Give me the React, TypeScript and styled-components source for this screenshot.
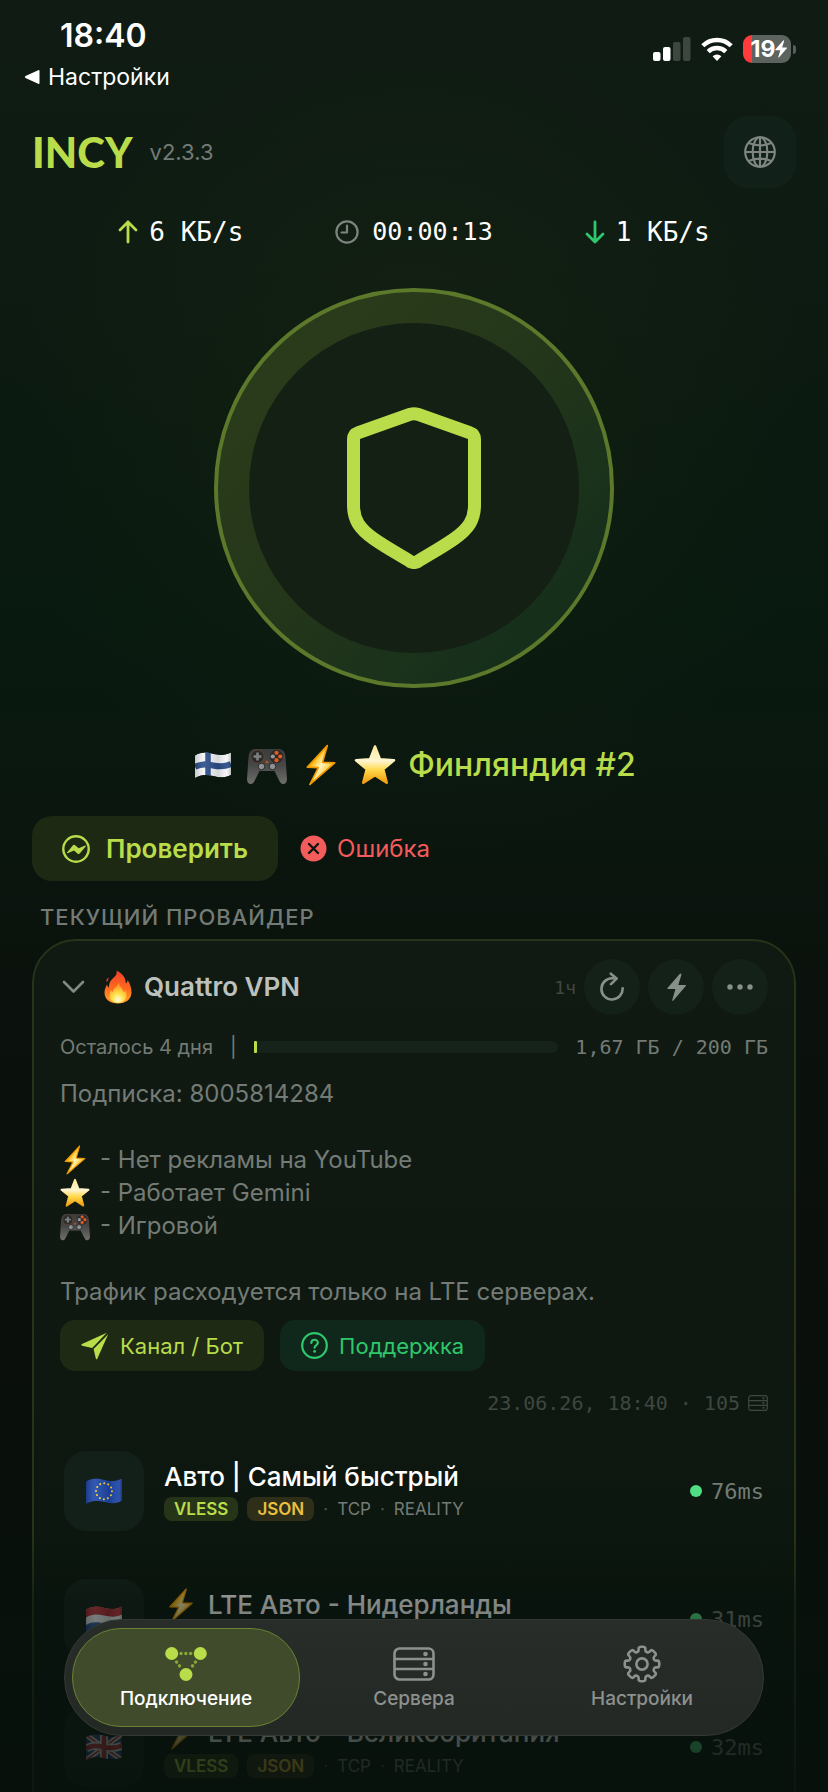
import React from "react";
import styled, { createGlobalStyle, css } from "styled-components";

const sans = `Inter, "Noto Sans", "Liberation Sans", sans-serif`;
const mono = `"DejaVu Sans Mono", "Liberation Mono", monospace`;

const color = {
  lime: "#b8dc4a",
  green: "#2fc76c",
  amber: "#e8c03e",
  red: "#f45b5b",
  text: "#ffffff",
  soft: "#bdc1be",
  muted: "#747b76",
  faint: "#3e4741",
  tile: "#13201a",
};

const GlobalStyle = createGlobalStyle`
  *, *::before, *::after { box-sizing: border-box; }
  body { margin: 0; background: #0b130d; }
  button, a { font: inherit; color: inherit; text-decoration: none; }
  button { border: 0; padding: 0; background: none; cursor: pointer; }
  h1, h2, h3, p, ul { margin: 0; padding: 0; list-style: none; font: inherit; }
  svg { display: block; flex: none; }
`;

const Shell = styled.div`
  position: relative;
  height: 100vh;
  overflow: hidden;
  font-family: ${sans};
  color: ${color.text};
  background:
    radial-gradient(ellipse 400px 440px at 50% 420px, rgba(34, 44, 18, 0.3), transparent),
    linear-gradient(180deg, #0f1b13 0, #0e1b12 240px, #08190f 620px, #0a170f 780px, #0b110c 1000px, #0a0f0b 1350px, #07120e 1792px);
`;

const Page = styled.main`
  display: flex;
  flex-direction: column;
  padding: 0 32px;
`;

/* Status bar */

const StatusBar = styled.header`
  display: flex;
  justify-content: space-between;
  align-items: flex-start;
  padding: 17px 32px 0 24px;
`;

const Clock = styled.div`
  padding-left: 36px;
  font-size: 32px;
  line-height: 38px;
  font-weight: 600;
`;

const BackLink = styled.a`
  display: flex;
  align-items: center;
  gap: 8px;
  margin-top: 8px;
  font-size: 23px;
  line-height: 28px;
`;

const Indicators = styled.div`
  display: flex;
  align-items: center;
  gap: 10px;
  padding-top: 18px;
`;

const Battery = styled.div`
  display: flex;
  align-items: center;
  gap: 2px;
`;

const BatteryBody = styled.div`
  display: flex;
  align-items: center;
  justify-content: center;
  width: 48px;
  height: 28px;
  padding-left: 4px;
  border-radius: 9px;
  font-size: 23px;
  line-height: 28px;
  font-weight: 700;
  background: linear-gradient(90deg, #ff3b3b 9px, #5d645f 9px);
`;

const BatteryTip = styled.div`
  width: 3px;
  height: 9px;
  border-radius: 0 3px 3px 0;
  background: #59605b;
`;

/* Title and traffic */

const TitleBar = styled.div`
  display: flex;
  align-items: center;
  gap: 17px;
  margin-top: 25px;
`;

const Brand = styled.h1`
  font-family: Lato, ${sans};
  font-size: 42px;
  line-height: 48px;
  font-weight: 900;
  color: ${color.lime};
`;

const Version = styled.span`
  flex: 1;
  font-size: 22px;
  color: ${color.muted};
`;

const LanguageButton = styled.button`
  display: grid;
  place-items: center;
  width: 72px;
  height: 72px;
  border-radius: 24px;
  color: #7f8681;
  background: #112018;
`;

const Stats = styled.div`
  display: flex;
  justify-content: center;
  gap: 92px;
  margin-top: 28px;
  font-family: ${mono};
  line-height: 32px;
`;

const Stat = styled.div<{ $timer?: boolean }>`
  display: flex;
  align-items: center;
  gap: ${(p) => (p.$timer ? 13 : 11)}px;
  font-size: ${(p) => (p.$timer ? 25 : 26)}px;
  white-space: pre;
`;

/* Connect control */

const ConnectButton = styled.button`
  display: grid;
  place-items: center;
  align-self: center;
  width: 400px;
  height: 400px;
  margin-top: 40px;
  border: 4px solid #5c792b;
  border-radius: 50%;
  background: linear-gradient(135deg, #2a3b1b 20%, #25371a 45%, #162f1b 82%);
`;

const ConnectCore = styled.span`
  display: grid;
  place-items: center;
  width: 330px;
  height: 330px;
  border-radius: 50%;
  background: #142014;
`;

const Location = styled.h2`
  display: flex;
  align-items: center;
  justify-content: center;
  gap: 12px;
  margin-top: 56px;
  font-size: 32px;
  line-height: 40px;
  font-weight: 500;
  color: ${color.lime};
`;

const EmojiCell = styled.span`
  display: grid;
  place-items: center;
  width: 42px;
  height: 42px;
`;

const Actions = styled.div`
  display: flex;
  align-items: center;
  gap: 22px;
  margin-top: 30px;
`;

const CheckButton = styled.button`
  display: flex;
  align-items: center;
  gap: 16px;
  height: 65px;
  padding: 0 30px;
  border-radius: 20px;
  font-size: 26px;
  font-weight: 600;
  color: ${color.lime};
  background: #1e2914;
`;

const CheckResult = styled.p`
  display: flex;
  align-items: center;
  gap: 10px;
  font-size: 24px;
  color: ${color.red};
`;

const SectionLabel = styled.h2`
  margin: 24px 0 0 8px;
  font-size: 22px;
  line-height: 24px;
  font-weight: 500;
  letter-spacing: 1px;
  text-transform: uppercase;
  color: ${color.muted};
`;

/* Provider card */

const Card = styled.section`
  margin-top: 10px;
  padding: 18px 26px;
  border: 2px solid #283318;
  border-radius: 44px;
  background: linear-gradient(180deg, #101a12, #0e1810 50%, #08140d);
`;

const CardHeader = styled.div`
  display: flex;
  align-items: center;
  gap: 8px;
`;

const ProviderToggle = styled.button`
  display: flex;
  flex: 1;
  align-items: center;
  gap: 12px;
  font-size: 26px;
  line-height: 32px;
  font-weight: 600;
  text-align: left;
  color: ${color.soft};
`;

const Age = styled.span`
  font-family: ${mono};
  font-size: 18px;
  color: ${color.faint};
`;

const RoundButton = styled.button`
  display: grid;
  place-items: center;
  width: 56px;
  height: 56px;
  border-radius: 50%;
  color: #879089;
  background: #142118;
`;

const Usage = styled.div`
  display: flex;
  align-items: center;
  gap: 17px;
  margin-top: 18px;
  font-size: 20px;
  line-height: 28px;
  color: ${color.muted};
`;

const UsageTrack = styled.div`
  flex: 1;
  height: 12px;
  border-radius: 0 6px 6px 0;
  background: #15231a;
`;

const UsageFill = styled.div`
  min-width: 3px;
  height: 100%;
  border-radius: 1px;
  background: ${color.lime};
`;

const UsageAmount = styled.span`
  font-family: ${mono};
`;

const Notes = styled.div`
  margin-top: 16px;
  font-size: 24px;
  line-height: 33px;
  color: ${color.muted};
`;

const NoteLine = styled.p`
  display: flex;
  align-items: center;
  gap: 10px;
  min-height: 33px;
`;

const Links = styled.div`
  display: flex;
  gap: 16px;
  margin-top: 12px;
`;

const LinkButton = styled.a<{ $tone: "lime" | "green" }>`
  display: flex;
  align-items: center;
  gap: 11px;
  height: 51px;
  padding: 0 21px;
  border-radius: 15px;
  font-size: 22px;
  color: ${(p) => color[p.$tone]};
  background: ${(p) => (p.$tone === "lime" ? "#1f2a14" : "#10281b")};
`;

const Meta = styled.p`
  display: flex;
  align-items: center;
  justify-content: flex-end;
  gap: 8px;
  margin-top: 20px;
  font-family: ${mono};
  font-size: 20px;
  line-height: 24px;
  color: ${color.faint};
`;

/* Server list */

const ServerList = styled.ul`
  margin-top: 12px;
`;

const ServerRow = styled.li`
  display: flex;
  align-items: center;
  gap: 20px;
  padding: 24px 4px;
`;

const FlagTile = styled.div`
  display: grid;
  place-items: center;
  width: 80px;
  height: 80px;
  border-radius: 22px;
  background: ${color.tile};
`;

const ServerInfo = styled.div`
  flex: 1;
`;

const ServerName = styled.h3`
  display: flex;
  align-items: center;
  gap: 10px;
  font-size: 26px;
  line-height: 32px;
  font-weight: 500;
`;

const Tags = styled.div`
  display: flex;
  align-items: center;
  gap: 9px;
  margin-top: 4px;
  font-size: 17px;
  line-height: 24px;
  color: ${color.muted};
`;

const Tag = styled.span<{ $tone: "lime" | "amber" }>`
  padding: 0 10px;
  border-radius: 8px;
  font-weight: 600;
  color: ${(p) => color[p.$tone]};
  background: ${(p) => (p.$tone === "lime" ? "#263418" : "#2e2e19")};
`;

const Separator = styled.span`
  color: #4d554f;
`;

const Latency = styled.div`
  display: flex;
  align-items: center;
  gap: 9px;
  font-family: ${mono};
  font-size: 22px;
  color: ${color.muted};

  &::before {
    content: "";
    width: 12px;
    height: 12px;
    border-radius: 50%;
    background: #50de82;
  }
`;

/* Bottom navigation */

const BottomFade = styled.div`
  position: absolute;
  inset: auto 0 0;
  height: 256px;
  pointer-events: none;
  background: linear-gradient(
    180deg,
    rgba(8, 17, 12, 0),
    rgba(8, 17, 12, 0.5) 26%,
    rgba(8, 17, 12, 0.74) 76%,
    rgba(8, 17, 12, 0.8)
  );
`;

const NavBar = styled.nav`
  position: absolute;
  inset: auto 64px 56px;
  display: flex;
  padding: 8px 7px;
  border: 1px solid #323834;
  border-radius: 58px;
  background: linear-gradient(180deg, #282d2a, #232825);
`;

const NavItem = styled.a<{ $active?: boolean }>`
  display: flex;
  flex: 1;
  flex-direction: column;
  align-items: center;
  gap: 4px;
  padding: 16px 0 15px;
  border: 1px solid transparent;
  border-radius: 49px;
  font-size: 19px;
  line-height: 24px;
  font-weight: 500;
  color: #8d918e;
  ${(p) =>
    p.$active &&
    css`
      color: ${color.text};
      border-color: #6a8234;
      background: #404b2b;
    `}
`;

const NavIcon = styled.span`
  display: grid;
  place-items: center;
  height: 38px;
`;

/* Icons */

const BackIcon = () => (
  <svg width="16" height="16" viewBox="0 0 16 16">
    <path d="M15.500 2v12q0 1.500-1.300.8L1.500 8.900q-1.500-.9 0-1.800L14.200 1.200q1.300-.7 1.300.8z" fill="#fff" />
  </svg>
);

const SignalIcon = () => (
  <svg width="38" height="24" viewBox="0 0 38 24">
    <rect x="0" y="15" width="7.500" height="9" rx="2" fill="#fff" />
    <rect x="10" y="10" width="7.500" height="14" rx="2" fill="#fff" />
    <rect x="20" y="5" width="7.500" height="19" rx="2" fill="#3d463f" />
    <rect x="30" y="0" width="7.500" height="24" rx="2" fill="#3d463f" />
  </svg>
);

const WifiIcon = () => (
  <svg width="32" height="24" viewBox="0 0 32 24" fill="none" stroke="#fff" strokeWidth="4.400">
    <path d="M1.800 8.800a20.200 20.200 0 0 1 28.400 0" />
    <path d="M7.200 14.600a12.600 12.600 0 0 1 17.600 0" />
    <path d="M11.600 19.200a6.300 6.300 0 0 1 8.800 0L16 24z" fill="#fff" stroke="none" />
  </svg>
);

const boltPath = "M15 1 3.500 14.200q-.7 1 .5 1h7L8 25.500q-.2 1.700 1.200.4L20.800 12.300q.7-1-.5-1h-6.600L16.600 1.800Q16.700-.3 15 1z";

const BoltIcon = ({ size, fill = "currentColor" }: { size: number; fill?: string }) => (
  <svg width={size} height={size * 1.5} viewBox="3 0 18 27">
    <path d={boltPath} fill={fill} />
  </svg>
);

const GlobeIcon = () => (
  <svg width="32" height="32" viewBox="0 0 34 34" fill="none" stroke="currentColor" strokeWidth="2.300">
    <circle cx="17" cy="17" r="15.700" />
    <ellipse cx="17" cy="17" rx="7.800" ry="15.700" />
    <path d="M17 1.500v31M1.500 17h31M5 7.500q12 5 24 0M5 26.500q12-5 24 0" />
  </svg>
);

const ArrowIcon = ({ down }: { down?: boolean }) => (
  <svg
    width="20" height="24" viewBox="0 0 20 24" fill="none" strokeWidth="2.800"
    strokeLinecap="round" strokeLinejoin="round" stroke={down ? color.green : color.lime}
  >
    <path d={down ? "M10 2v20M2 14l8 8 8-8" : "M10 22V2M2 10l8-8 8 8"} />
  </svg>
);

const ClockIcon = () => (
  <svg width="24" height="24" viewBox="0 0 24 24" fill="none" stroke="#7d847f" strokeWidth="2.200">
    <circle cx="12" cy="12" r="10.600" />
    <path d="M12 5.500V12.500H6.500" strokeLinecap="round" strokeLinejoin="round" />
  </svg>
);

const ShieldIcon = () => (
  <svg width="134" height="162" viewBox="0 0 134 162" fill="none" stroke={color.lime} strokeWidth="13" strokeLinejoin="round">
    <path d="M63.500 7.200q3.500-1 7 0L122.500 25.600q5 1.800 5 6.500v66c0 15-6 23.500-20 33.500-11 7.800-25 15.600-37 23q-3.500 1.800-7 0c-12-7.400-26-15.200-37-23-14-10-20-18.500-20-33.500v-66q0-4.700 5-6.500z" />
  </svg>
);

const PulseIcon = () => (
  <svg width="28" height="28" viewBox="0 0 28 28">
    <circle cx="14" cy="14" r="12.700" fill="none" stroke="currentColor" strokeWidth="2.400" />
    <path d="M5 17.600 11 10.200q.8-.8 1.800-.1l3.900 3.100 6.500-2.600q1.100-.1.500.8l-6 7.200q-.9.9-2 .1L12 15.500 5.600 18.300q-1 .2-.6-.7z" fill="currentColor" />
  </svg>
);

const ErrorIcon = () => (
  <svg width="27" height="27" viewBox="0 0 27 27">
    <circle cx="13.500" cy="13.500" r="13" fill="currentColor" />
    <path d="m9 9 9 9m0-9-9 9" stroke="#0c150f" strokeWidth="2.400" strokeLinecap="round" />
  </svg>
);

const ChevronIcon = () => (
  <svg width="32" height="16" viewBox="0 0 32 16" fill="none" stroke="#828984" strokeWidth="2.600" strokeLinecap="round" strokeLinejoin="round">
    <path d="m4 3 9.500 9.500L23 3" />
  </svg>
);

const ReloadIcon = () => (
  <svg width="28" height="30" viewBox="0 0 28 30" fill="none" stroke="currentColor" strokeWidth="2.600" strokeLinecap="round" strokeLinejoin="round">
    <path d="M24.600 16.200A10.600 10.600 0 1 1 14 6.300h4.500M12.800 1.700l5.800 4.900-5.600 5.600" />
  </svg>
);

const DotsIcon = () => (
  <svg width="26" height="6" viewBox="0 0 26 6" fill="currentColor">
    <circle cx="3" cy="3" r="2.700" />
    <circle cx="13" cy="3" r="2.700" />
    <circle cx="23" cy="3" r="2.700" />
  </svg>
);

const PlaneIcon = () => (
  <svg width="28" height="28" viewBox="0 0 28 28" fill="currentColor">
    <path d="M25.800.8 1 12q-1.600 1 .2 1.700l10 2.400L25.800.8z" />
    <path d="M27.200 2.200 16.400 26.400q-.8 1.700-1.600 0L12.600 17 27.200 2.200z" />
  </svg>
);

const HelpIcon = () => (
  <svg width="27" height="27" viewBox="0 0 27 27" fill="none" stroke="currentColor" strokeWidth="2.200" strokeLinecap="round">
    <circle cx="13.500" cy="13.500" r="12.300" />
    <path d="M10.300 11c.1-4.300 6.500-4.200 6.500-.3 0 2.600-3.200 2.500-3.200 5" />
    <path d="M13.600 19.300v.1" strokeWidth="2.800" />
  </svg>
);

const ServersIcon = ({ width }: { width: number }) => (
  <svg width={width} height={(width * 34) / 42} viewBox="0 0 42 34" fill="none" stroke="currentColor" strokeWidth="2.600">
    <rect x="1.500" y="1.500" width="39" height="31" rx="5" />
    <path d="M2 12h38M2 22h38" />
    <g fill="currentColor" stroke="none">
      <circle cx="32.500" cy="7" r="2.300" />
      <circle cx="32.500" cy="17" r="2.300" />
      <circle cx="32.500" cy="27" r="2.300" />
    </g>
  </svg>
);

const NodesIcon = () => (
  <svg width="42" height="34" viewBox="0 0 42 34">
    <g fill={color.lime}>
      <circle cx="6.700" cy="6.500" r="6.500" />
      <circle cx="35.300" cy="6.500" r="6.500" />
      <circle cx="21" cy="27.500" r="6.500" />
    </g>
    <path d="M16 6.500h12M11.500 15l5 6.500M30.500 15l-5 6.500" stroke="#88a53b" strokeWidth="3.400" strokeLinecap="round" strokeDasharray="0.1 4.700" fill="none" />
  </svg>
);

/* Traces an eight-tooth cog with softened corners. */
const gearOutline = (() => {
  const corners: [number, number][] = [];
  for (let tooth = 0; tooth < 8; tooth++) {
    const base = (tooth * Math.PI) / 4 - Math.PI / 2;
    [[-0.25, 13], [-0.2, 17.6], [0.2, 17.6], [0.25, 13]].forEach(([offset, radius]) => {
      corners.push([19 + radius * Math.cos(base + offset), 19 + radius * Math.sin(base + offset)]);
    });
  }
  const between = (a: [number, number], b: [number, number], t: number) =>
    `${(a[0] + (b[0] - a[0]) * t).toFixed(2)} ${(a[1] + (b[1] - a[1]) * t).toFixed(2)}`;
  const parts = corners.map((corner, i) => {
    const previous = corners[(i + corners.length - 1) % corners.length];
    const next = corners[(i + 1) % corners.length];
    return `${i ? "L" : "M"}${between(corner, previous, 0.4)}Q${between(corner, corner, 0)} ${between(corner, next, 0.4)}`;
  });
  return `${parts.join("")}Z`;
})();

const GearIcon = () => (
  <svg width="38" height="38" viewBox="0 0 38 38" fill="none" stroke="currentColor" strokeWidth="2.600" strokeLinejoin="round">
    <path d={gearOutline} />
    <circle cx="19" cy="19" r="5.600" />
  </svg>
);

/* Pictograms */

const BoltEmoji = ({ size }: { size: number }) => (
  <svg width={size} height={size} viewBox="0 0 40 40">
    <defs>
      <linearGradient id="bolt" x1="0" y1="0" x2="1" y2="1">
        <stop offset="0.3" stopColor="#ffb300" />
        <stop offset="0.5" stopColor="#fff6c0" />
        <stop offset="0.75" stopColor="#ffc21a" />
      </linearGradient>
    </defs>
    <path d="M26 1.500 7 22l10.500.5L9.500 38.500 33 18 21.500 17.500z" fill="url(#bolt)" stroke="#f09a00" strokeWidth="1.600" strokeLinejoin="round" />
  </svg>
);

const StarEmoji = ({ size }: { size: number }) => (
  <svg width={size} height={size} viewBox="0 0 40 40">
    <defs>
      <linearGradient id="star" x1="0" y1="0" x2="0" y2="1">
        <stop offset="0" stopColor="#ffe9a0" />
        <stop offset="0.4" stopColor="#fff5cf" />
        <stop offset="0.65" stopColor="#ffd84a" />
        <stop offset="1" stopColor="#f09c10" />
      </linearGradient>
    </defs>
    <path d="m20 2.500 4.700 12.200 13.300.8-10.300 8.400 3.400 12.900L20 29.600 8.900 36.800l3.400-12.900L2 15.500l13.300-.8z" fill="url(#star)" stroke="url(#star)" strokeWidth="2.600" strokeLinejoin="round" />
  </svg>
);

const GamepadEmoji = ({ size }: { size: number }) => (
  <svg width={size} height={size} viewBox="0 0 40 40">
    <defs>
      <linearGradient id="pad" x1="0" y1="0" x2="0" y2="1">
        <stop offset="0" stopColor="#3c3c3c" />
        <stop offset="0.45" stopColor="#474747" />
        <stop offset="1" stopColor="#6e6e6c" />
      </linearGradient>
    </defs>
    <path d="M7 4h26q5 1 5.500 8L40 34q0 5-4 5-2.400 0-4-4l-4.500-9h-15L8 35q-1.600 4-4 4-4 0-4-5L1.500 12Q2 5 7 4z" fill="url(#pad)" />
    <circle cx="10.500" cy="11.500" r="6.600" fill="#2a2a2a" stroke="#6b4632" strokeWidth="0.800" />
    <circle cx="29.500" cy="11.500" r="6.600" fill="#2a2a2a" />
    <path d="M10.500 7.500v8M6.500 11.500h8" stroke="#7e8080" strokeWidth="2.600" />
    <g>
      <circle cx="29.500" cy="7.800" r="2.100" fill="#e65a1e" />
      <circle cx="33.200" cy="11.500" r="2.100" fill="#e65a1e" />
      <circle cx="25.800" cy="11.500" r="2.100" fill="#9a9a9a" />
      <circle cx="29.500" cy="15.200" r="2.100" fill="#e65a1e" />
      <circle cx="20" cy="17" r="1.300" fill="#c4521e" />
      <circle cx="14.500" cy="21.500" r="3.300" fill="#8d9192" stroke="#2a2a2a" />
      <circle cx="25.500" cy="21.500" r="3.300" fill="#8d9192" stroke="#2a2a2a" />
    </g>
  </svg>
);

const FireEmoji = () => (
  <svg width="28" height="34" viewBox="0 0 28 34">
    <defs>
      <linearGradient id="flame" x1="0" y1="0" x2="0" y2="1">
        <stop offset="0" stopColor="#f0402c" />
        <stop offset="0.55" stopColor="#ff6a1f" />
        <stop offset="1" stopColor="#ffa62a" />
      </linearGradient>
      <radialGradient id="flameCore" cx="0.5" cy="0.85" r="0.7">
        <stop offset="0" stopColor="#fffbe0" />
        <stop offset="0.45" stopColor="#ffe34a" />
        <stop offset="1" stopColor="#ff9a24" />
      </radialGradient>
    </defs>
    <path d="M12.500.5c6 3 9.500 7.500 9.300 13 1.200-.7 1.700-2 1.800-3.500 2.500 3.500 4 8 3.900 12.500C27.300 29.500 21.500 33.500 14 33.500S.7 29.500.5 23c-.1-3.500 1.200-6 2.500-8.500.4 1.500 1 2.500 2 3.200C4.800 11 8.500 9 11.300 6c1.300-1.500 1.700-3.500 1.200-5.500z" fill="url(#flame)" />
    <path d="M2.500 12c-.5-2 .5-3.500 2-4.500 0 2-.5 3.500-2 4.500z" fill="#f0402c" />
    <path d="M14.500 12.500c.5 4 4.500 5.500 5 9.500 1-.3 1.500-1 1.800-2 1.200 2.500 1.700 4.500 1 7-1 4-4.500 5.800-8.300 5.800S6.300 31 5.500 27c-.5-3 .3-5 1.500-7 .5 1.200 1 1.700 1.800 2 .2-4 5-5 5.700-9.500z" fill="url(#flameCore)" />
  </svg>
);

const flagShape = "M0 3.500C6-.3 11 0 18 1.700S30 3.500 36 .5v22.500c-6 3-11 2.800-18 1.100S6 22.500 0 26z";

type Country = "fi" | "eu" | "nl" | "gb";

const flagArt: Record<Country, React.ReactNode> = {
  fi: (
    <>
      <path d={flagShape} fill="#f2f4f7" />
      <path d="M0 15C6 11.500 11 12 18 13.500S30 15 36 12" stroke="#2a4c88" strokeWidth="6" fill="none" />
      <path d="M13 0v27" stroke="#2a4c88" strokeWidth="5.500" />
    </>
  ),
  eu: (
    <>
      <path d={flagShape} fill="#1d46a8" />
      <circle cx="18" cy="13.200" r="8" fill="none" stroke="#f3cf3c" strokeWidth="2" strokeLinecap="round" strokeDasharray="0.1 4.088" />
    </>
  ),
  nl: (
    <>
      <path d={flagShape} fill="#f2f4f7" />
      <path d="M0 0h36v8.500C30 11.500 25 11 18 9.500S6 8 0 11.500z" fill="#c02a34" />
      <path d="M0 19C6 15.500 11 16 18 17.500S30 19 36 16v12H0z" fill="#24509c" />
    </>
  ),
  gb: (
    <>
      <path d={flagShape} fill="#24408c" />
      <path d="m0 1 36 25M36 0 0 26" stroke="#f2f4f7" strokeWidth="5" />
      <path d="m0 1 36 25M36 0 0 26" stroke="#cc2f3c" strokeWidth="1.800" />
      <path d="M18 0v27M0 14.500C6 11 11 11.500 18 13S30 14.500 36 11.500" stroke="#f2f4f7" strokeWidth="8" fill="none" />
      <path d="M18 0v27M0 14.500C6 11 11 11.500 18 13S30 14.500 36 11.500" stroke="#cc2f3c" strokeWidth="4.600" fill="none" />
    </>
  ),
};

const Flag = ({ country }: { country: Country }) => (
  <svg width="36" height="27" viewBox="0 0 36 27">
    <defs>
      <clipPath id={`clip-${country}`}>
        <path d={flagShape} />
      </clipPath>
      <linearGradient id={`shade-${country}`}>
        <stop offset="0" stopColor="#000" stopOpacity="0.18" />
        <stop offset="0.25" stopColor="#fff" stopOpacity="0.1" />
        <stop offset="0.65" stopColor="#000" stopOpacity="0.12" />
        <stop offset="0.88" stopColor="#fff" stopOpacity="0.06" />
        <stop offset="1" stopColor="#000" stopOpacity="0.25" />
      </linearGradient>
    </defs>
    <g clipPath={`url(#clip-${country})`}>
      {flagArt[country]}
      <rect width="36" height="27" fill={`url(#shade-${country})`} />
    </g>
  </svg>
);

/* Data */

const usage = { used: 1.67, total: 200 };

const servers: { country: Country; name: string; lte?: boolean; ping: number }[] = [
  { country: "eu", name: "Авто | Самый быстрый", ping: 76 },
  { country: "nl", name: "LTE Авто - Нидерланды", lte: true, ping: 31 },
  { country: "gb", name: "LTE Авто - Великобритания", lte: true, ping: 32 },
];

const Server = ({ country, name, lte, ping }: (typeof servers)[number]) => (
  <ServerRow>
    <FlagTile>
      <Flag country={country} />
    </FlagTile>
    <ServerInfo>
      <ServerName>
        {lte && <BoltEmoji size={34} />}
        {name}
      </ServerName>
      <Tags>
        <Tag $tone="lime">VLESS</Tag>
        <Tag $tone="amber">JSON</Tag>
        <Separator>·</Separator>
        <span>TCP</span>
        <Separator>·</Separator>
        <span>REALITY</span>
      </Tags>
    </ServerInfo>
    <Latency>{ping}ms</Latency>
  </ServerRow>
);

export default function App() {
  return (
    <Shell>
      <GlobalStyle />
      <StatusBar>
        <div>
          <Clock>18:40</Clock>
          <BackLink href="#settings">
            <BackIcon />
            Настройки
          </BackLink>
        </div>
        <Indicators>
          <SignalIcon />
          <WifiIcon />
          <Battery>
            <BatteryBody>
              19
              <BoltIcon size={12} />
            </BatteryBody>
            <BatteryTip />
          </Battery>
        </Indicators>
      </StatusBar>

      <Page>
        <TitleBar>
          <Brand>INCY</Brand>
          <Version>v2.3.3</Version>
          <LanguageButton aria-label="Язык">
            <GlobeIcon />
          </LanguageButton>
        </TitleBar>

        <Stats>
          <Stat>
            <ArrowIcon />6 КБ/s
          </Stat>
          <Stat $timer>
            <ClockIcon />
            00:00:13
          </Stat>
          <Stat>
            <ArrowIcon down />1 КБ/s
          </Stat>
        </Stats>

        <ConnectButton aria-label="Отключить">
          <ConnectCore>
            <ShieldIcon />
          </ConnectCore>
        </ConnectButton>

        <Location>
          <EmojiCell>
            <Flag country="fi" />
          </EmojiCell>
          <EmojiCell>
            <GamepadEmoji size={40} />
          </EmojiCell>
          <EmojiCell>
            <BoltEmoji size={42} />
          </EmojiCell>
          <EmojiCell>
            <StarEmoji size={42} />
          </EmojiCell>
          Финляндия #2
        </Location>

        <Actions>
          <CheckButton>
            <PulseIcon />
            Проверить
          </CheckButton>
          <CheckResult>
            <ErrorIcon />
            Ошибка
          </CheckResult>
        </Actions>

        <SectionLabel>Текущий провайдер</SectionLabel>

        <Card>
          <CardHeader>
            <ProviderToggle aria-expanded="true">
              <ChevronIcon />
              <FireEmoji />
              Quattro VPN
            </ProviderToggle>
            <Age>1ч</Age>
            <RoundButton aria-label="Обновить">
              <ReloadIcon />
            </RoundButton>
            <RoundButton aria-label="Проверить пинг">
              <BoltIcon size={19} />
            </RoundButton>
            <RoundButton aria-label="Ещё">
              <DotsIcon />
            </RoundButton>
          </CardHeader>

          <Usage>
            <span>Осталось 4 дня</span>
            <span>|</span>
            <UsageTrack role="progressbar" aria-label="Трафик" aria-valuenow={usage.used} aria-valuemax={usage.total}>
              <UsageFill style={{ width: `${(usage.used / usage.total) * 100}%` }} />
            </UsageTrack>
            <UsageAmount>1,67 ГБ / 200 ГБ</UsageAmount>
          </Usage>

          <Notes>
            <NoteLine>Подписка: 8005814284</NoteLine>
            <NoteLine />
            <NoteLine>
              <BoltEmoji size={30} />- Нет рекламы на YouTube
            </NoteLine>
            <NoteLine>
              <StarEmoji size={30} />- Работает Gemini
            </NoteLine>
            <NoteLine>
              <GamepadEmoji size={30} />- Игровой
            </NoteLine>
            <NoteLine />
            <NoteLine>Трафик расходуется только на LTE серверах.</NoteLine>
          </Notes>

          <Links>
            <LinkButton href="#channel" $tone="lime">
              <PlaneIcon />
              Канал / Бот
            </LinkButton>
            <LinkButton href="#support" $tone="green">
              <HelpIcon />
              Поддержка
            </LinkButton>
          </Links>

          <Meta>
            23.06.26, 18:40 · 105
            <ServersIcon width={20} />
          </Meta>

          <ServerList>
            {servers.map((server) => (
              <Server key={server.country} {...server} />
            ))}
          </ServerList>
        </Card>
      </Page>

      <BottomFade />
      <NavBar>
        <NavItem href="#connection" $active aria-current="page">
          <NavIcon>
            <NodesIcon />
          </NavIcon>
          Подключение
        </NavItem>
        <NavItem href="#servers">
          <NavIcon>
            <ServersIcon width={42} />
          </NavIcon>
          Сервера
        </NavItem>
        <NavItem href="#preferences">
          <NavIcon>
            <GearIcon />
          </NavIcon>
          Настройки
        </NavItem>
      </NavBar>
    </Shell>
  );
}
